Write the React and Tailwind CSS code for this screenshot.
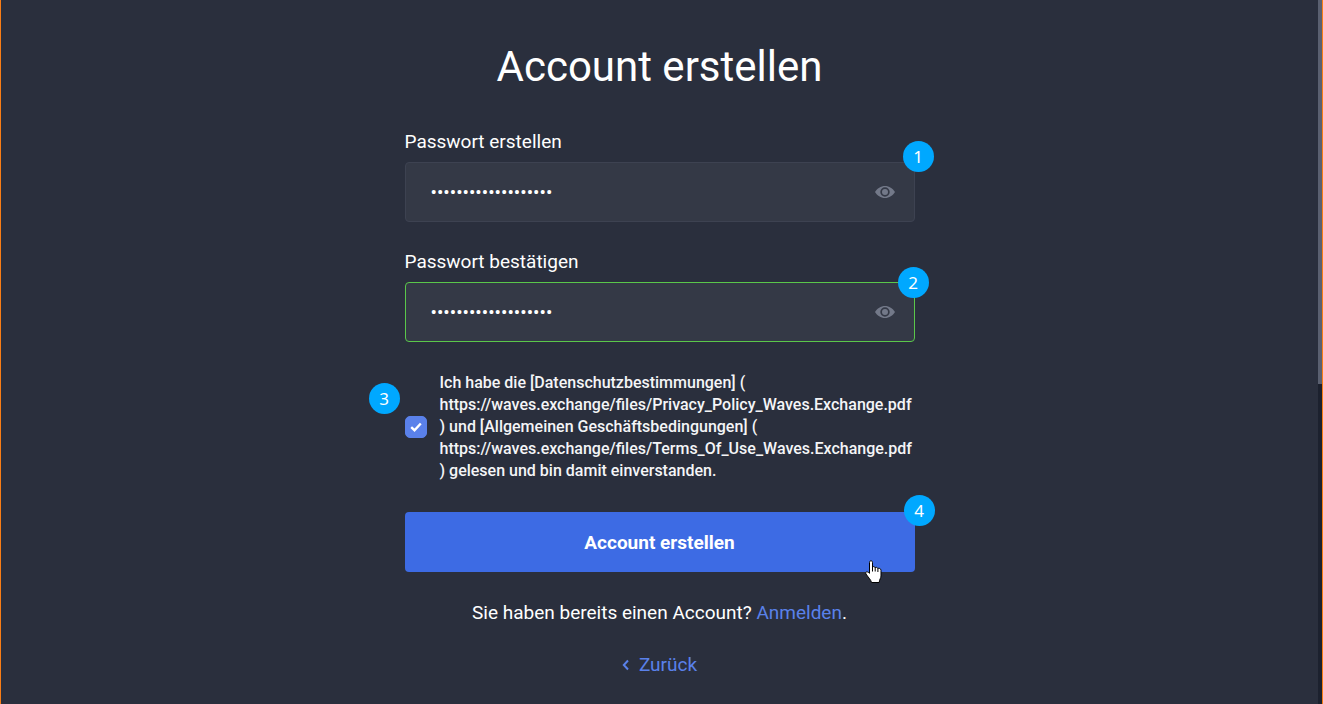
import { useState } from "react";

const PRIVACY_URL = "https://waves.exchange/files/Privacy_Policy_Waves.Exchange.pdf";
const TERMS_URL = "https://waves.exchange/files/Terms_Of_Use_Waves.Exchange.pdf";

export default function App() {
  const [password, setPassword] = useState("correct-horse-batte");
  const [confirm, setConfirm] = useState("correct-horse-batte");
  const [accepted, setAccepted] = useState(true);

  return (
    <div className="flex min-h-screen border-x border-[#f97d16] bg-[#2a2f3d] font-['Roboto',sans-serif] text-white">
      <main className="flex-1 px-4 pt-10">
        <h1 className="text-center text-[42px] leading-[54px]">Account erstellen</h1>

        <form
          className="mx-auto mt-[37px] w-full max-w-[510px]"
          onSubmit={(e) => e.preventDefault()}
        >
          <PasswordField
            id="password"
            label="Passwort erstellen"
            value={password}
            onChange={setPassword}
            inputClass="border-[#3d4251]"
          >
            <StepBadge className="-top-[21px] -right-[19px]">1</StepBadge>
          </PasswordField>

          <div className="mt-[29px]">
            <PasswordField
              id="confirm"
              label="Passwort bestätigen"
              value={confirm}
              onChange={setConfirm}
              inputClass="border-[#5ac74a]"
            >
              <StepBadge className="-top-[15px] -right-[14px]">2</StepBadge>
            </PasswordField>
          </div>

          <div className="relative mt-[30px] flex items-center gap-[13px]">
            <span className="relative size-[22px] shrink-0">
              <input
                id="accept"
                type="checkbox"
                checked={accepted}
                onChange={(e) => setAccepted(e.target.checked)}
                className="peer block size-[22px] appearance-none rounded-[5px] border border-[#5a81ea] checked:bg-[#5a81ea]"
              />
              <svg
                viewBox="0 0 22 22"
                fill="none"
                stroke="currentColor"
                strokeWidth="2.4"
                className="pointer-events-none absolute inset-0 hidden peer-checked:block"
              >
                <path d="M6.200 11.200 9.500 14.200 15.800 7.500" />
              </svg>
            </span>
            <label htmlFor="accept" className="text-base font-medium leading-[22px] text-[#f4f5f7]">
              Ich habe die [Datenschutzbestimmungen] (<br />
              {PRIVACY_URL}<br />
              ) und [Allgemeinen Geschäftsbedingungen] (<br />
              {TERMS_URL}<br />
              ) gelesen und bin damit einverstanden.
            </label>
            <StepBadge className="top-[11px] -left-9">3</StepBadge>
          </div>

          <div className="relative mt-[30px]">
            <button
              type="submit"
              className="h-[60px] w-full cursor-pointer rounded bg-[#3d6be4] pt-0.5 text-[19px] font-bold"
            >
              Account erstellen
            </button>
            <StepBadge className="-top-[17px] -right-5">4</StepBadge>
            <HandPointer />
          </div>
        </form>

        <p className="mt-[29px] text-center text-[19px] leading-6">
          Sie haben bereits einen Account?{" "}
          <a href="#login" className="text-[#5a81ea]">Anmelden</a>.
        </p>

        <p className="mt-7 text-center text-[19px] leading-6">
          <a href="#back" className="inline-flex items-center gap-[10px] text-[#5a81ea]">
            <svg width="7" height="12" viewBox="0 0 7 12" fill="none" stroke="currentColor" strokeWidth="2">
              <path d="M6 1.500 1.800 6 6 10.500" />
            </svg>
            Zurück
          </a>
        </p>
      </main>

      <div className="w-1 bg-[#1c212e]">
        <div className="h-96 bg-[#5a6070]" />
      </div>
    </div>
  );
}

function PasswordField({ id, label, value, onChange, inputClass, children }) {
  const [visible, setVisible] = useState(false);

  return (
    <div>
      <label htmlFor={id} className="block text-[19px] leading-[22px]">
        {label}
      </label>
      <div className="relative mt-[9px]">
        <input
          id={id}
          type={visible ? "text" : "password"}
          value={value}
          onChange={(e) => onChange(e.target.value)}
          className={`block h-[60px] w-full rounded border bg-[#343946] pl-[25px] pr-14 text-[19px] outline-none ${inputClass}`}
        />
        <button
          type="button"
          aria-label="Passwort anzeigen"
          onClick={() => setVisible(!visible)}
          className="absolute top-6 right-5 text-[#737989]"
        >
          <svg width="20" height="12" viewBox="0 0 20 12" className="block">
            <path
              fill="currentColor"
              fillRule="evenodd"
              d="M10 0C5.800 0 2.200 2.400 0 6c2.200 3.600 5.800 6 10 6s7.800-2.400 10-6C17.800 2.400 14.200 0 10 0Zm0 10.700a4.700 4.700 0 1 1 0-9.400 4.700 4.700 0 0 1 0 9.400Z"
            />
            <circle cx="10" cy="6" r="3" fill="currentColor" />
          </svg>
        </button>
        {children}
      </div>
    </div>
  );
}

function StepBadge({ className, children }) {
  return (
    <span
      className={`absolute flex size-[31px] items-center justify-center rounded-full bg-[#00a8ff] font-['Noto_Sans',sans-serif] text-[17px] ${className}`}
    >
      {children}
    </span>
  );
}

function HandPointer() {
  return (
    <svg
      width="18"
      height="24"
      viewBox="0 0 18 24"
      className="pointer-events-none absolute right-8 -bottom-3"
    >
      <path
        d="M4.500 2.500C4.500.2 7.500.2 7.500 2.500V7c.8-.8 2.400-.4 2.600.7.900-.8 2.500-.3 2.700.8 1-.6 3.200-.1 3.200 1.800V16c0 2-1.500 3.200-1.800 6.500H6.500C6.200 20 2.500 16.500 1 14c-1.300-2.200 1.200-3.200 3.500-.7Z"
        fill="#fff"
        stroke="#000"
      />
      <path d="M7.500 7v4.500M10.200 7.700v3.800M12.900 8.500v3.500" stroke="#000" />
    </svg>
  );
}
